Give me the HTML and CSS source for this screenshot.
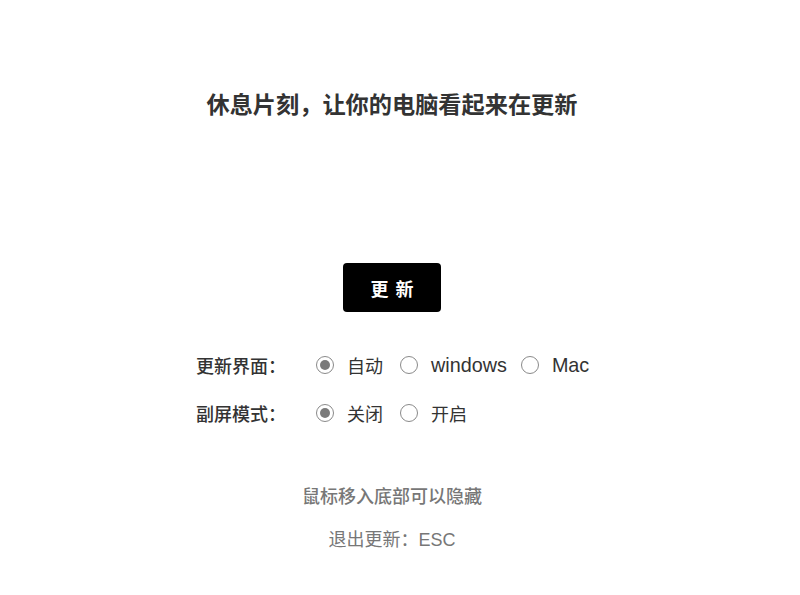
FILE: index.html
```html
<!DOCTYPE html>
<html lang="zh">
<head>
<meta charset="utf-8">
<link rel="stylesheet" href="styles.css">
</head>
<body>
<div class="page">
  <h1 class="title">休息片刻，让你的电脑看起来在更新</h1>
  <button class="btn">更 新</button>
  <div class="options">
    <div class="row">
      <span class="label">更新界面：</span>
      <span class="radio checked"></span><span class="opt">自动</span>
      <span class="radio"></span><span class="opt latin">windows</span>
      <span class="radio"></span><span class="opt latin">Mac</span>
    </div>
    <div class="row">
      <span class="label">副屏模式：</span>
      <span class="radio checked"></span><span class="opt">关闭</span>
      <span class="radio"></span><span class="opt">开启</span>
    </div>
  </div>
  <p class="hint">鼠标移入底部可以隐藏</p>
  <p class="hint esc">退出更新：ESC</p>
</div>
</body>
</html>
```
FILE: styles.css
```css
html, body {
  margin: 0;
  padding: 0;
  background: #fff;
}
body {
  font-family: "Liberation Sans", "Noto Sans CJK SC", sans-serif;
  color: #333;
}
.page {
  width: 784px;
  display: flex;
  flex-direction: column;
  align-items: center;
}
.title {
  margin: 90px 0 0;
  font-size: 23.2px;
  line-height: 30px;
  font-weight: bold;
  color: #333;
}
.btn {
  margin-top: 143px;
  width: 98px;
  height: 49px;
  border: none;
  border-radius: 4px;
  background: #000;
  color: #fff;
  font-family: "Liberation Sans", "Noto Sans CJK SC", sans-serif;
  font-size: 18px;
  font-weight: bold;
  letter-spacing: 1px;
  padding: 0 0 0 1px;
}
.options {
  margin-top: 41px;
  align-self: flex-start;
  margin-left: 196px;
  display: flex;
  flex-direction: column;
  gap: 24px;
}
.row {
  display: flex;
  align-items: center;
  height: 24px;
  font-size: 18px;
}
.label {
  width: 120px;
  font-weight: 500;
  color: #333;
}
.radio {
  box-sizing: border-box;
  width: 18px;
  height: 18px;
  border: 1px solid #8a8a8a;
  border-radius: 50%;
  display: flex;
  align-items: center;
  justify-content: center;
  margin-right: 13px;
}
.radio.checked::after {
  content: "";
  width: 10px;
  height: 10px;
  border-radius: 50%;
  background: #7a7a7a;
}
.opt {
  color: #333;
  margin-right: 17px;
}
.opt.latin {
  font-size: 19.8px;
  margin-right: 14px;
}
.hint {
  margin: 60px 0 0;
  font-size: 18px;
  line-height: 24px;
  font-weight: 500;
  color: #777;
}
.hint.esc {
  margin-top: 19px;
  font-weight: normal;
}
```
